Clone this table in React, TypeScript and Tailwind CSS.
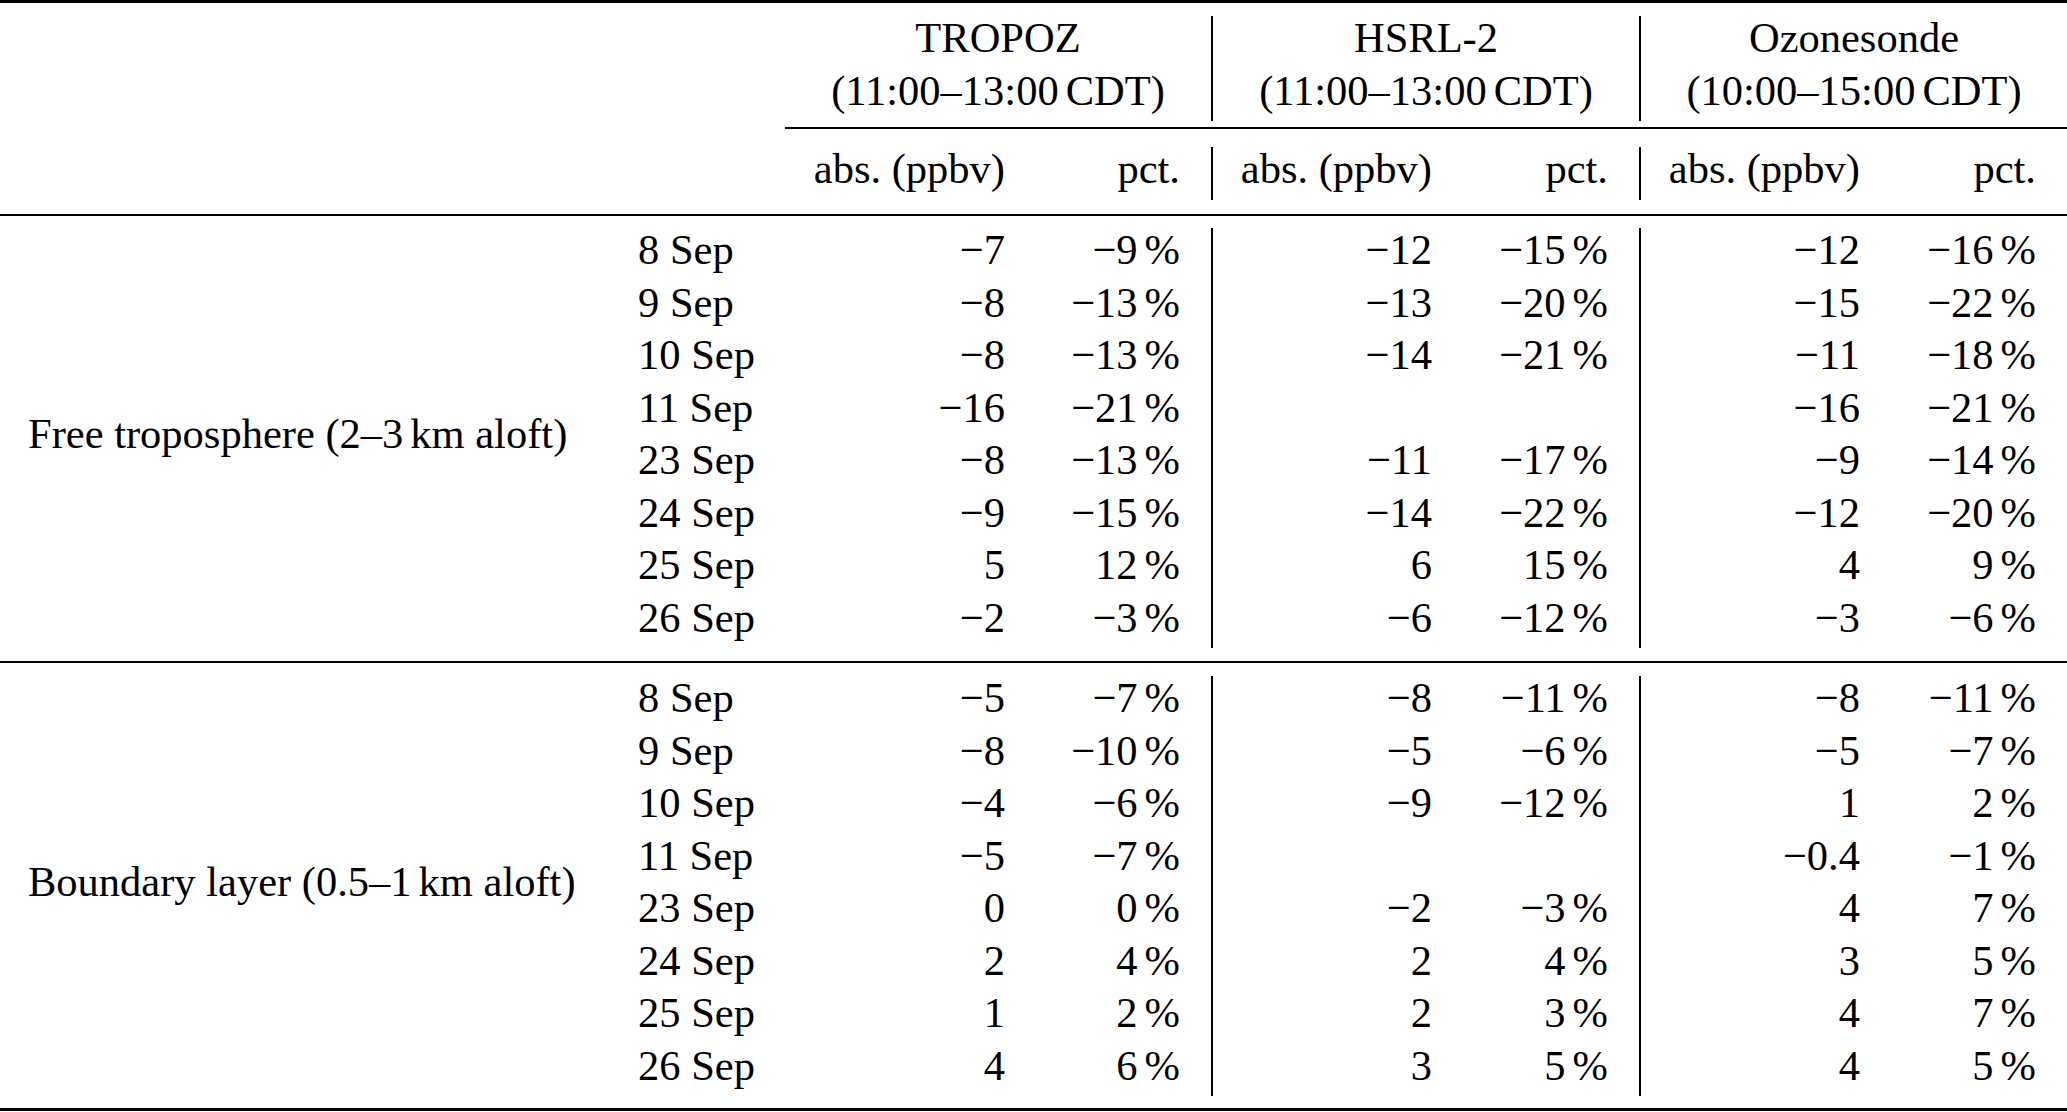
import React from "react";

const COLS =
  "grid grid-cols-[610px_175px_251px_175px_252px_176px_252px_176px]";
const ROW = "h-[52.5px] leading-[44.8px] whitespace-nowrap";

type Row = [string, string, string, string, string, string, string];

const free: Row[] = [
  ["8 Sep", "−7", "−9", "−12", "−15", "−12", "−16"],
  ["9 Sep", "−8", "−13", "−13", "−20", "−15", "−22"],
  ["10 Sep", "−8", "−13", "−14", "−21", "−11", "−18"],
  ["11 Sep", "−16", "−21", "", "", "−16", "−21"],
  ["23 Sep", "−8", "−13", "−11", "−17", "−9", "−14"],
  ["24 Sep", "−9", "−15", "−14", "−22", "−12", "−20"],
  ["25 Sep", "5", "12", "6", "15", "4", "9"],
  ["26 Sep", "−2", "−3", "−6", "−12", "−3", "−6"],
];

const boundary: Row[] = [
  ["8 Sep", "−5", "−7", "−8", "−11", "−8", "−11"],
  ["9 Sep", "−8", "−10", "−5", "−6", "−5", "−7"],
  ["10 Sep", "−4", "−6", "−9", "−12", "1", "2"],
  ["11 Sep", "−5", "−7", "", "", "−0.4", "−1"],
  ["23 Sep", "0", "0", "−2", "−3", "4", "7"],
  ["24 Sep", "2", "4", "2", "4", "3", "5"],
  ["25 Sep", "1", "2", "2", "3", "4", "7"],
  ["26 Sep", "4", "6", "3", "5", "4", "5"],
];

function Thin() {
  return <span className="inline-block w-[7px]" />;
}

function Pct({ v }: { v: string }) {
  if (v === "") return null;
  return (
    <>
      {v}
      <Thin />%
    </>
  );
}

function Block({ pre, post, rows }: { pre: string; post: string; rows: Row[] }) {
  return (
    <div className={COLS}>
      <div className="col-start-1 row-span-8 flex items-center pl-[28px]">
        <div className={ROW}>
          {pre}
          <Thin />
          {post}
        </div>
      </div>
      {rows.map((r) => (
        <React.Fragment key={r[0]}>
          <div className={`${ROW} col-start-2 pl-[28px]`}>{r[0]}</div>
          <div className={`${ROW} text-right pr-[31px]`}>{r[1]}</div>
          <div className={`${ROW} text-right pr-[31px]`}>
            <Pct v={r[2]} />
          </div>
          <div className={`${ROW} text-right pr-[31px] border-l-2 border-black`}>
            {r[3]}
          </div>
          <div className={`${ROW} text-right pr-[31px]`}>
            <Pct v={r[4]} />
          </div>
          <div className={`${ROW} text-right pr-[31px] border-l-2 border-black`}>
            {r[5]}
          </div>
          <div className={`${ROW} text-right pr-[31px]`}>
            <Pct v={r[6]} />
          </div>
        </React.Fragment>
      ))}
    </div>
  );
}

function Group({ name, time, line }: { name: string; time: string; line?: boolean }) {
  return (
    <div className={`col-span-2 text-center ${line ? "border-l-2 border-black" : ""}`}>
      <div className={ROW}>{name}</div>
      <div className={ROW}>
        {time}
        <Thin />
        CDT)
      </div>
    </div>
  );
}

export default function App() {
  return (
    <div className="w-[2067px] h-[1112px] bg-white text-black font-['Liberation_Serif','Times_New_Roman',serif] text-[42.5px] overflow-hidden">
      <div className="h-[3px] bg-black" />
      <div className={`${COLS} mt-[13px]`}>
        <div className="col-start-3 col-span-2 text-center">
          <div className={ROW}>TROPOZ</div>
          <div className={ROW}>
            (11:00–13:00
            <Thin />
            CDT)
          </div>
        </div>
        <Group name="HSRL-2" time="(11:00–13:00" line />
        <Group name="Ozonesonde" time="(10:00–15:00" line />
      </div>
      <div className={`${COLS} mt-[6px]`}>
        <div className="col-start-3 col-span-6 h-[2px] bg-black" />
      </div>
      <div className={`${COLS} mt-[18px]`}>
        <div className={`${ROW} col-start-3 text-right pr-[31px]`}>abs. (ppbv)</div>
        <div className={`${ROW} text-right pr-[31px]`}>pct.</div>
        <div className={`${ROW} text-right pr-[31px] border-l-2 border-black`}>abs. (ppbv)</div>
        <div className={`${ROW} text-right pr-[31px]`}>pct.</div>
        <div className={`${ROW} text-right pr-[31px] border-l-2 border-black`}>abs. (ppbv)</div>
        <div className={`${ROW} text-right pr-[31px]`}>pct.</div>
      </div>
      <div className="mt-[14px] h-[2px] bg-black" />
      <div className="mt-[12.75px]">
        <Block pre="Free troposphere (2–3" post="km aloft)" rows={free} />
      </div>
      <div className="mt-[13px] h-[2px] bg-black" />
      <div className="mt-[13px]">
        <Block pre="Boundary layer (0.5–1" post="km aloft)" rows={boundary} />
      </div>
      <div className="mt-[12px] h-[3px] bg-black" />
    </div>
  );
}
